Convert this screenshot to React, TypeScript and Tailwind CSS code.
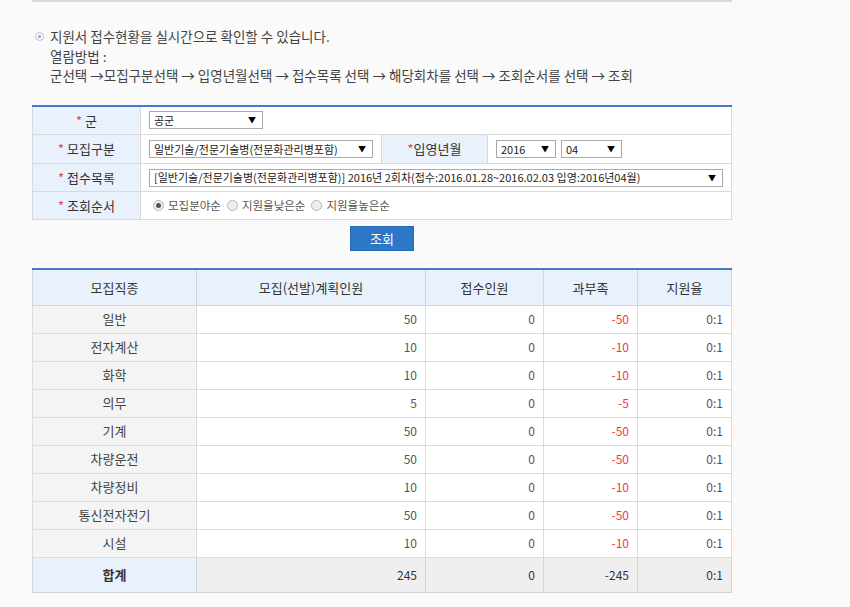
const rows = [
  { name: '일반', plan: 50, got: 0, diff: -50 },
  { name: '전자계산', plan: 10, got: 0, diff: -10 },
  { name: '화학', plan: 10, got: 0, diff: -10 },
  { name: '의무', plan: 5, got: 0, diff: -5 },
  { name: '기계', plan: 50, got: 0, diff: -50 },
  { name: '차량운전', plan: 50, got: 0, diff: -50 },
  { name: '차량정비', plan: 10, got: 0, diff: -10 },
  { name: '통신전자전기', plan: 50, got: 0, diff: -50 },
  { name: '시설', plan: 10, got: 0, diff: -10 },
]

function Select({ value, className }: { value: string; className: string }) {
  return (
    <div
      className={`flex h-[18px] items-center justify-between border border-[#a9a9a9] bg-white pr-1.5 pl-1 text-[11px] text-[#222] ${className}`}
    >
      <span className="truncate whitespace-nowrap">{value}</span>
      <span className="ml-1 text-[8px] text-black">▼</span>
    </div>
  )
}

function Radio({ checked, label }: { checked?: boolean; label: string }) {
  return (
    <span className="mr-[6px] flex items-center gap-[4px]">
      <span className="flex h-[11px] w-[11px] items-center justify-center rounded-full border border-[#b5b5b5] bg-[#eee]">
        {checked && <span className="h-[5px] w-[5px] rounded-full bg-[#555]" />}
      </span>
      <span>{label}</span>
    </span>
  )
}

function Label({ text, className = '' }: { text: string; className?: string }) {
  return (
    <td className={`border border-[#d9d9d9] bg-[#e9f1fc] text-center text-[13px] text-[#333] ${className}`}>
      <span className="text-[#e0454b]">*</span> {text}
    </td>
  )
}

export default function App() {
  return (
    <div
      className="min-h-[607px] bg-[#fafafa] text-[#444]"
      style={{ fontFamily: '"Noto Sans CJK KR", "Noto Sans", sans-serif' }}
    >
      <div className="mx-[32px] w-[700px]">
        <div className="h-[2px] bg-[#d5d9e0]" />

        <div className="pt-[25px] pl-[3px] text-[13.5px] leading-[19.5px] text-[#444]">
          <div className="flex items-center gap-[6px]">
            <span className="flex h-[9px] w-[9px] items-center justify-center rounded-full border border-[#b8c4d8]">
              <span className="h-[3px] w-[3px] rounded-full bg-[#8da2c6]" />
            </span>
            <span>지원서 접수현황을 실시간으로 확인할 수 있습니다.</span>
          </div>
          <div className="pl-[15px]">열람방법 :</div>
          <div className="pl-[15px]">
            군선택 →모집구분선택 → 입영년월선택 → 접수목록 선택 → 해당회차를 선택 → 조회순서를 선택 → 조회
          </div>
        </div>

        <table className="mt-[19px] w-[700px] table-fixed border-collapse border-t-2 border-t-[#4a78c8] bg-white">
          <colgroup>
            <col className="w-[108px]" />
            <col className="w-[241px]" />
            <col className="w-[106px]" />
            <col />
          </colgroup>
          <tbody>
            <tr className="h-[29px]">
              <Label text="군" />
              <td colSpan={3} className="border border-[#d9d9d9] px-2">
                <Select value="공군" className="w-[114px]" />
              </td>
            </tr>
            <tr className="h-[29px]">
              <Label text="모집구분" />
              <td className="border border-[#d9d9d9] px-2">
                <Select value="일반기술/전문기술병(전문화관리병포함)" className="w-[224px]" />
              </td>
              <td className="border border-[#d9d9d9] bg-[#e9f1fc] text-center text-[13px] text-[#333]">
                <span className="text-[#e0454b]">*</span>입영년월
              </td>
              <td className="border border-[#d9d9d9] px-2">
                <div className="flex gap-[5px]">
                  <Select value="2016" className="w-[60px]" />
                  <Select value="04" className="w-[61px]" />
                </div>
              </td>
            </tr>
            <tr className="h-[28px]">
              <Label text="접수목록" />
              <td colSpan={3} className="border border-[#d9d9d9] px-2">
                <Select
                  value="[일반기술/전문기술병(전문화관리병포함)] 2016년 2회차(접수:2016.01.28~2016.02.03 입영:2016년04월)"
                  className="w-[574px]"
                />
              </td>
            </tr>
            <tr className="h-[28px]">
              <Label text="조회순서" />
              <td colSpan={3} className="border border-[#d9d9d9] pl-[12px] text-[11.5px] text-[#555]">
                <div className="flex items-center">
                  <Radio checked label="모집분야순" />
                  <Radio label="지원율낮은순" />
                  <Radio label="지원율높은순" />
                </div>
              </td>
            </tr>
          </tbody>
        </table>

        <div className="mt-[6px] flex justify-center">
          <button className="h-[25px] w-[64px] border border-[#2469b5] bg-[#2d77c6] text-[13px] text-white">
            조회
          </button>
        </div>

        <table className="mt-[17px] w-[700px] table-fixed border-collapse border-t-2 border-t-[#4a78c8] text-[12px]">
          <colgroup>
            <col className="w-[164px]" />
            <col className="w-[229px]" />
            <col className="w-[118px]" />
            <col className="w-[94px]" />
            <col />
          </colgroup>
          <thead>
            <tr className="h-[36px] bg-[#e9f1fc] text-[13px] text-[#333]">
              {['모집직종', '모집(선발)계획인원', '접수인원', '과부족', '지원율'].map((h) => (
                <th key={h} className="border border-[#d4d4d4] font-normal">
                  {h}
                </th>
              ))}
            </tr>
          </thead>
          <tbody>
            {rows.map((r) => (
              <tr key={r.name} className="h-[28px] text-[#555]">
                <td className="border border-[#dcdcdc] bg-[#f4f4f4] text-center text-[13px] text-[#444]">
                  {r.name}
                </td>
                <td className="border border-[#dcdcdc] bg-white pr-2 text-right">{r.plan}</td>
                <td className="border border-[#dcdcdc] bg-white pr-2 text-right">{r.got}</td>
                <td className="border border-[#dcdcdc] bg-white pr-2 text-right text-[#f03a3a]">{r.diff}</td>
                <td className="border border-[#dcdcdc] bg-white pr-2 text-right">0:1</td>
              </tr>
            ))}
            <tr className="h-[35px] text-[#333]">
              <td className="border border-[#d4d4d4] bg-[#e9f1fc] text-center text-[13px] font-bold">합계</td>
              <td className="border border-[#d4d4d4] bg-[#efefef] pr-2 text-right">245</td>
              <td className="border border-[#d4d4d4] bg-[#efefef] pr-2 text-right">0</td>
              <td className="border border-[#d4d4d4] bg-[#efefef] pr-2 text-right">-245</td>
              <td className="border border-[#d4d4d4] bg-[#efefef] pr-2 text-right">0:1</td>
            </tr>
          </tbody>
        </table>
      </div>
    </div>
  )
}
